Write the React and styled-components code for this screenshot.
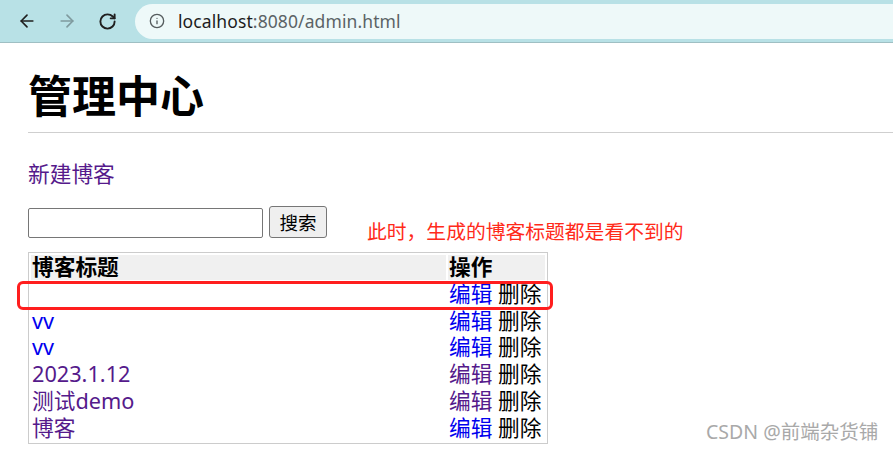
import React from "react";
import styled, { createGlobalStyle } from "styled-components";
import { ArrowLeft, ArrowRight, RotateCw, Info } from "lucide-react";

const GlobalStyle = createGlobalStyle`
  html, body {
    margin: 0;
    padding: 0;
    background: #ffffff;
  }
  body {
    font-family: "Noto Sans", "Noto Sans CJK SC", sans-serif;
  }
`;

const Screen = styled("div")`
  position: relative;
  width: 893px;
  height: 454px;
  overflow: hidden;
  background: #ffffff;
`;

const Toolbar = styled("div")`
  display: flex;
  align-items: center;
  height: 42px;
  background: #b8e1e6;
  border-bottom: 1px solid #9fbfc3;
`;

const NavButton = styled("div")`
  display: flex;
  align-items: center;
  justify-content: center;
  width: 40px;
  height: 36px;
  margin-left: ${(p) => p.$gap || 0}px;
  color: ${(p) => (p.$disabled ? "#7f9a9e" : "#1f1f1f")};
`;

const AddressBar = styled("div")`
  display: flex;
  align-items: center;
  flex: 1;
  height: 35px;
  margin-left: 8px;
  padding-left: 14px;
  background: #eef9f9;
  border-radius: 18px 0 0 18px;
`;

const Url = styled("span")`
  margin-left: 13px;
  font-family: "Noto Sans", sans-serif;
  font-size: 17.5px;
  color: #5b6366;
  letter-spacing: 0.1px;
`;

const Host = styled("span")`
  color: #1d1d1d;
`;

const Page = styled("div")`
  padding: 0 0 0 28px;
`;

const Heading = styled("h1")`
  margin: 28px 0 11px;
  font-size: 44px;
  line-height: 50px;
  font-weight: 700;
  color: #000;
`;

const Rule = styled("hr")`
  margin: 0;
  border: none;
  border-top: 1px solid #cfcfcf;
`;

const TextLink = styled("a")`
  color: ${(p) => (p.$visited ? "#551a8b" : "#0000ee")};
  text-decoration: none;
  cursor: pointer;
`;

const NewLink = styled(TextLink)`
  display: block;
  margin-top: 27px;
  font-size: 21.7px;
  line-height: 28px;
`;

const SearchRow = styled("div")`
  display: flex;
  align-items: flex-end;
  margin-top: 18px;
`;

const SearchInput = styled("input")`
  box-sizing: border-box;
  width: 235px;
  height: 30px;
  border: 1px solid #767676;
  border-radius: 2px;
  padding: 0 4px;
  font-size: 18px;
`;

const SearchButton = styled("button")`
  box-sizing: border-box;
  width: 58px;
  height: 32px;
  margin-left: 6px;
  padding: 0;
  border: 1px solid #767676;
  border-radius: 3px;
  background: #efefef;
  font-family: "Noto Sans CJK SC", sans-serif;
  font-size: 18.5px;
  line-height: 28px;
  color: #000;
`;

const Note = styled("span")`
  margin-left: 40px;
  margin-bottom: -5px;
  font-family: "Noto Sans CJK SC", sans-serif;
  font-size: 19.8px;
  line-height: 24px;
  color: #ff2a1a;
`;

const TableWrap = styled("div")`
  position: relative;
  margin-top: 14px;
  width: 520px;
`;

const Table = styled("table")`
  width: 520px;
  border: 1px solid #cccccc;
  border-spacing: 2px;
  font-size: 21.7px;
  table-layout: fixed;
`;

const HeadCell = styled("th")`
  width: ${(p) => p.$w}px;
  padding: 0 0 0 1px;
  height: 24.8px;
  line-height: 24.8px;
  background: #f0f0f0;
  text-align: left;
  font-weight: 700;
  color: #000;
`;

const Cell = styled("td")`
  padding: 0 0 0 1px;
  height: 24.8px;
  line-height: 24.8px;
  white-space: nowrap;
  color: #000;
`;

const Highlight = styled("div")`
  position: absolute;
  left: -11px;
  top: 29px;
  width: 536px;
  height: 29px;
  box-sizing: border-box;
  border: 3px solid #ff1e1e;
  border-radius: 6px;
  pointer-events: none;
`;

const Watermark = styled("div")`
  position: absolute;
  left: 706px;
  top: 419px;
  font-family: "Noto Sans", "Noto Sans CJK SC", sans-serif;
  font-size: 19.5px;
  line-height: 26px;
  color: #a9a9a9;
`;

const blogs = [
  { title: "", titleVisited: false, editVisited: false },
  { title: "vv", titleVisited: false, editVisited: false },
  { title: "vv", titleVisited: false, editVisited: false },
  { title: "2023.1.12", titleVisited: true, editVisited: true },
  { title: "测试demo", titleVisited: true, editVisited: true },
  { title: "博客", titleVisited: true, editVisited: false },
];

const App = () => {
  return (
    <>
      <GlobalStyle />
      <Screen>
        <Toolbar>
          <NavButton $gap={7}>
            <ArrowLeft size={20} strokeWidth={2} />
          </NavButton>
          <NavButton $disabled>
            <ArrowRight size={20} strokeWidth={2} />
          </NavButton>
          <NavButton>
            <RotateCw size={19} strokeWidth={2.4} />
          </NavButton>
          <AddressBar>
            <Info size={16} strokeWidth={2} color="#555c5e" />
            <Url>
              <Host>localhost</Host>:8080/admin.html
            </Url>
          </AddressBar>
        </Toolbar>
        <Page>
          <Heading>管理中心</Heading>
          <Rule />
          <NewLink $visited>新建博客</NewLink>
          <SearchRow>
            <SearchInput type="text" />
            <SearchButton>搜索</SearchButton>
            <Note>此时，生成的博客标题都是看不到的</Note>
          </SearchRow>
          <TableWrap>
            <Table>
              <thead>
                <tr>
                  <HeadCell $w={414}>博客标题</HeadCell>
                  <HeadCell $w={96}>操作</HeadCell>
                </tr>
              </thead>
              <tbody>
                {blogs.map((b, i) => (
                  <tr key={i}>
                    <Cell>
                      <TextLink $visited={b.titleVisited}>{b.title}</TextLink>
                    </Cell>
                    <Cell>
                      <TextLink $visited={b.editVisited}>编辑</TextLink> 删除
                    </Cell>
                  </tr>
                ))}
              </tbody>
            </Table>
            <Highlight />
          </TableWrap>
        </Page>
        <Watermark>CSDN @前端杂货铺</Watermark>
      </Screen>
    </>
  );
};

export default App;
